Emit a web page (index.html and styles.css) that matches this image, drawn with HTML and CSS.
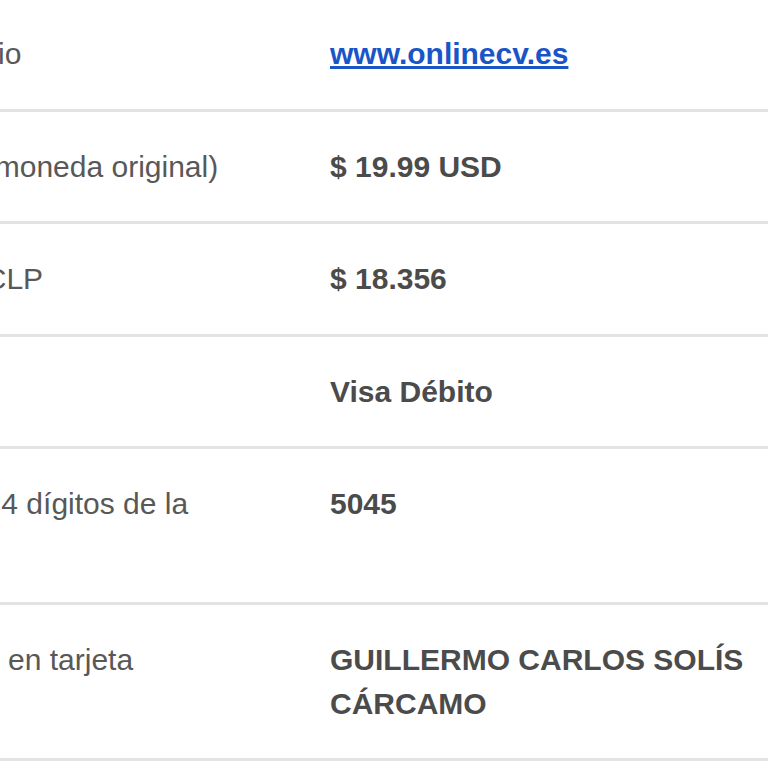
FILE: index.html
```html
<!DOCTYPE html>
<html lang="es">
<head>
    <meta charset="UTF-8">
    <meta name="viewport" content="width=device-width, initial-scale=1.0">
    <title>Detalle de la compra</title>
    <link rel="stylesheet" href="styles.css">
</head>
<body>
    <main class="receipt">
        <div class="row">
            <div class="label">Comercio</div>
            <div class="value"><a href="#">www.onlinecv.es</a></div>
        </div>
        <div class="row">
            <div class="label">Monto (moneda original)</div>
            <div class="value">$ 19.99 USD</div>
        </div>
        <div class="row">
            <div class="label">Monto CLP</div>
            <div class="value">$ 18.356</div>
        </div>
        <div class="row">
            <div class="label">Tarjeta</div>
            <div class="value">Visa Débito</div>
        </div>
        <div class="row">
            <div class="label">Últimos 4 dígitos de la tarjeta</div>
            <div class="value">5045</div>
        </div>
        <div class="row">
            <div class="label">Nombre en tarjeta</div>
            <div class="value">GUILLERMO CARLOS SOLÍS CÁRCAMO</div>
        </div>
    </main>
</body>
</html>
```

FILE: styles.css
```css
* {
    margin: 0;
    padding: 0;
    box-sizing: border-box;
}

body {
    font-family: 'Liberation Sans', Arial, sans-serif;
    background: #fff;
    color: #555;
    overflow: hidden;
}

.receipt {
    width: 897px;
    margin: -1px 0 0 -107px;
}

.row {
    display: grid;
    grid-template-columns: 437px 460px;
    padding: 33px 0;
    border-bottom: 3px solid #e3e3e3;
    font-size: 30px;
    line-height: 43.5px;
}

.label {
    padding-right: 60px;
    color: #585858;
}

.value {
    font-weight: bold;
    color: #4b4b4b;
}

.value a {
    color: #1a55c8;
    text-decoration: underline;
}
```
